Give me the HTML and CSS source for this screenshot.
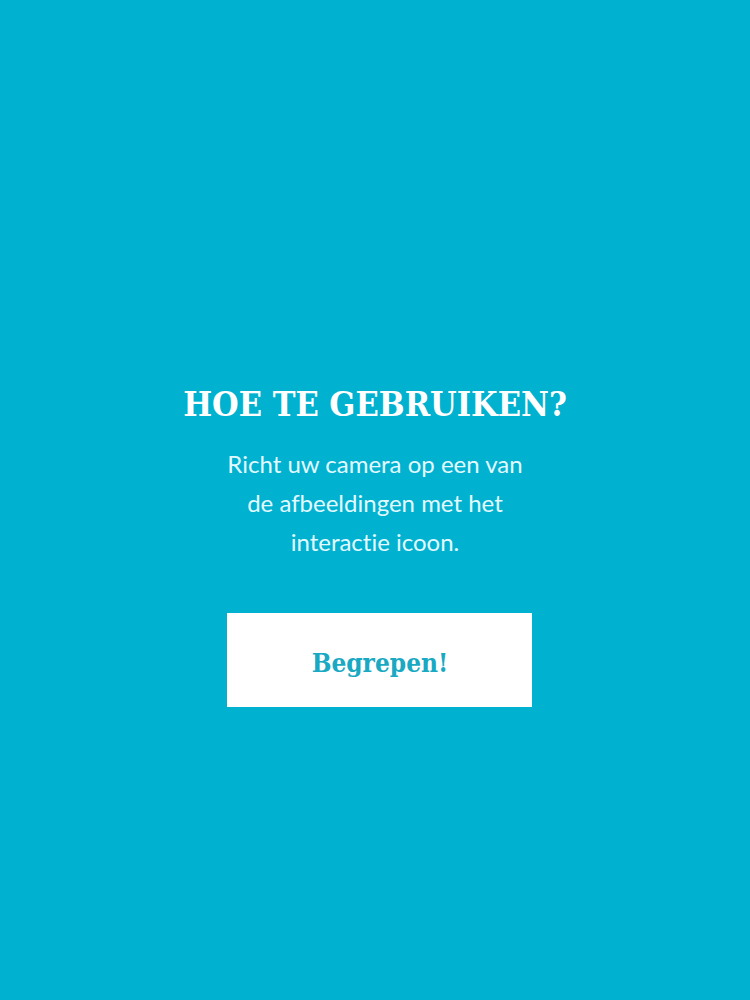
FILE: index.html
```html
<!DOCTYPE html>
<html lang="nl">
<head>
<meta charset="UTF-8">
<meta name="viewport" content="width=device-width, initial-scale=1.0">
<title>Hoe te gebruiken?</title>
<link rel="stylesheet" href="styles.css">
</head>
<body>
<main class="intro">
    <h1 class="title">HOE TE GEBRUIKEN?</h1>
    <p class="text">Richt uw camera op een van<br>de afbeeldingen met het<br>interactie icoon.</p>
    <button type="button" class="confirm">Begrepen!</button>
</main>
</body>
</html>
```

FILE: styles.css
```css
body {
    margin: 0;
    min-height: 100vh;
    display: flex;
    justify-content: center;
    align-items: center;
    background-color: #00b1d0;
    color: white;
}
.intro {
    display: flex;
    flex-direction: column;
    align-items: center;
    padding: 86px 16px 0;
    text-align: center;
}
.title {
    margin: 0 0 16px;
    font-family: "DejaVu Serif Condensed", "DejaVu Serif", serif;
    font-size: 34px;
    line-height: 48px;
    font-weight: bold;
}
.text {
    margin: 0 0 52px;
    font-family: Lato, sans-serif;
    font-size: 24px;
    line-height: 39px;
    font-variant-ligatures: none;
    color: #e2faff;
}
.confirm {
    box-sizing: border-box;
    min-width: 305px;
    padding: 26px 24px 20px;
    margin-left: 10px;
    border: none;
    background: white;
    color: #1aa9c3;
    font-family: "DejaVu Serif Condensed", "DejaVu Serif", serif;
    font-size: 26px;
    line-height: 48px;
    font-weight: bold;
    cursor: pointer;
}
```
